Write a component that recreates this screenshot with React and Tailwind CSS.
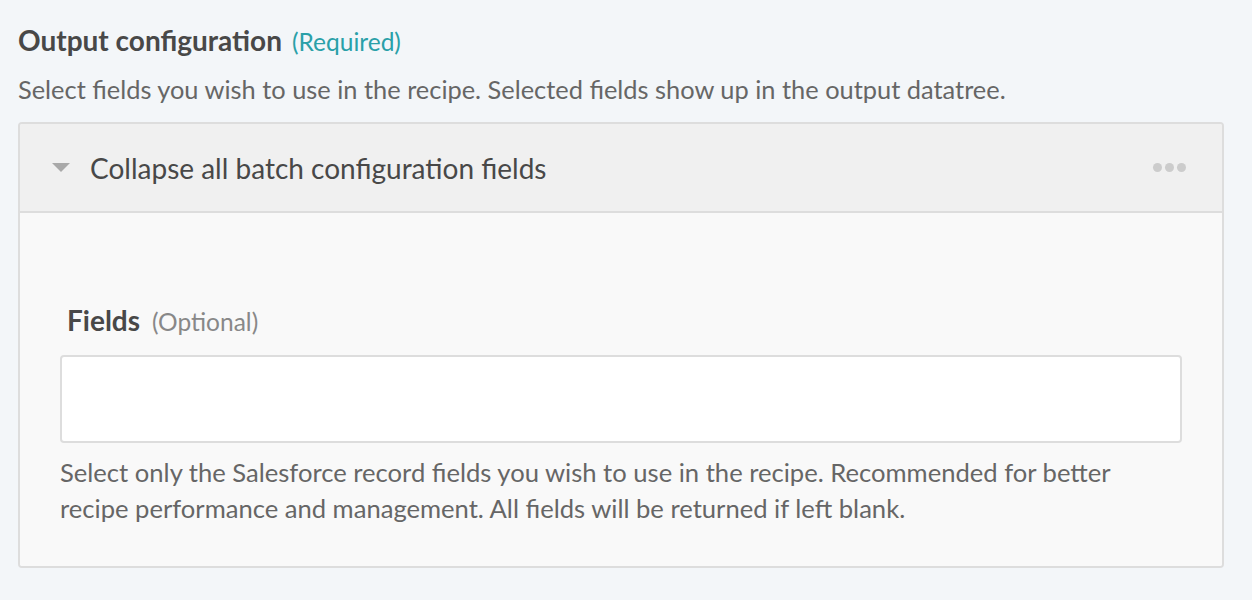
export default function App() {
  return (
    <div className="min-h-[600px] bg-[#f3f6f9] font-['Lato',sans-serif] pt-[23px] pl-[18px] pr-[28px]">
      <div className="flex items-baseline gap-[10px] h-[34px]">
        <h2 className="text-[28px] font-bold text-[#484848] leading-[34px]">Output configuration</h2>
        <span className="text-[24.5px] text-[#2aa0a8] leading-[34px]">(Required)</span>
      </div>
      <p className="text-[25.4px] text-[#666] leading-[30px] mt-[17px] whitespace-nowrap">
        Select fields you wish to use in the recipe. Selected fields show up in the output datatree.
      </p>

      <div className="mt-[18px] border-2 border-[#dddddd] rounded-[4px] overflow-hidden">
        <div className="h-[89px] bg-[#f0f0f0] border-b-2 border-[#dddddd] flex items-center pl-[32px] pr-[36px]">
          <svg width="18" height="10" viewBox="0 0 18 10" className="shrink-0">
            <polygon points="0,0 18,0 9,9" fill="#a9a9a9" />
          </svg>
          <span className="ml-[20px] text-[28px] text-[#484848]">Collapse all batch configuration fields</span>
          <div className="ml-auto flex gap-[3px]">
            <span className="w-[9px] h-[9px] rounded-full bg-[#cccccc]" />
            <span className="w-[9px] h-[9px] rounded-full bg-[#cccccc]" />
            <span className="w-[9px] h-[9px] rounded-full bg-[#cccccc]" />
          </div>
        </div>

        <div className="bg-[#f9f9f9] pt-[90px] pb-[40px] pl-[40px] pr-[40px]">
          <div className="flex items-baseline gap-[12px] pl-[7px] h-[34px]">
            <span className="text-[28px] font-bold text-[#484848] leading-[34px]">Fields</span>
            <span className="text-[24.5px] text-[#888] leading-[34px]">(Optional)</span>
          </div>
          <div className="mt-[18px] h-[88px] bg-white border-2 border-[#dddddd] rounded-[4px]" />
          <p className="mt-[11px] max-w-[1090px] text-[25.6px] leading-[36px] text-[#666]">
            Select only the Salesforce record fields you wish to use in the recipe. Recommended for better
            recipe performance and management. All fields will be returned if left blank.
          </p>
        </div>
      </div>
    </div>
  );
}
